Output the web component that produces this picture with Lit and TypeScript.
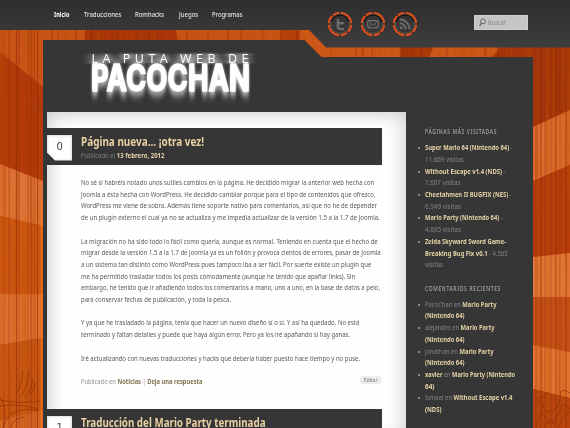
import { LitElement, html, css, svg } from "lit";
import { customElement, property } from "lit/decorators.js";

/** Single line of text condensed or widened so that it spans a given measure. */
@customElement("fit-text")
class FitText extends LitElement {
  @property({ type: Number }) w = 0;
  static styles = css`
    :host { display: block; white-space: nowrap; }
    span { display: inline-block; white-space: pre; transform-origin: 0 50%; }
  `;
  render() {
    return html`<span><slot></slot></span>`;
  }
  firstUpdated() {
    const el = this.renderRoot.querySelector("span") as HTMLElement;
    const natural = el.getBoundingClientRect().width;
    if (!this.w || !natural) return;
    this.style.width = this.w + "px";
    el.style.transform = `scaleX(${this.w / natural})`;
  }
}

@customElement("wood-backdrop")
class WoodBackdrop extends LitElement {
  static styles = css`
    :host { display: block; width: 570px; height: 428px; }
    svg { display: block; }
  `;
  render() {
    const grain = [4, 9, 16.5, 19, 28, 31, 34, 37.5, 52, 58, 76, 91, 101, 118, 137, 149, 158, 187, 208, 228, 241, 263, 281, 297, 331, 356, 363, 372, 402, 407, 414, 421, 447, 462, 485, 498, 505, 536, 541, 545, 551, 556, 560, 566];
    return html`<svg width="570" height="428" viewBox="0 0 570 428">
      <defs>
        <filter id="grain" x="0" y="0" width="100%" height="100%">
          <feTurbulence type="fractalNoise" baseFrequency="0.3 0.004" numOctaves="3" seed="8" />
          <feColorMatrix values="0 0 0 0 .5  0 0 0 0 .08  0 0 0 0 0  2.6 0 0 0 -1.05" />
        </filter>
      </defs>
      <rect width="570" height="428" fill="#b53f0a" />
      <path d="M0 0H85V40L43 87L0 52Z M172 0H203L210 60H180Z M203 0H280V60H210Z" fill="#c85418" />
      <path d="M0 52L43 87V181L0 164Z" fill="#b23a0b" />
      <path d="M0 164L43 181V226L0 216Z" fill="#df7336" />
      <path d="M0 216L43 226V294H0Z" fill="#cd5611" />
      <path d="M0 294H43V338L0 345Z" fill="#df7132" />
      <path d="M0 345L43 338V410L0 420Z" fill="#c95613" />
      <path d="M0 420L43 410V428H0Z" fill="#d66828" />
      <path d="M85 0H172L180 60H85Z" fill="#a83308" />
      <path d="M300 20H400V60H300Z M436 40H505L490 60H428Z" fill="#cd5719" />
      <path d="M400 40H436L428 60H400Z M505 40H570V110L533 127V60H492Z" fill="#a4340a" />
      <path d="M533 127L570 110V165L533 181Z" fill="#dd6d30" />
      <path d="M533 181L570 165V253L533 257Z" fill="#b63c0d" />
      <path d="M533 257L570 253V297H533Z" fill="#e47838" />
      <path d="M533 297H570V352L533 345Z" fill="#c55017" />
      <path d="M533 345L570 352V398L533 389Z" fill="#e27431" />
      <path d="M533 389L570 398V428H533Z" fill="#b9440f" />
      <rect width="570" height="428" filter="url(#grain)" opacity=".42" />
      ${grain.map((x, i) => svg`<path d="M${x} 0V428" stroke="#8a2503" stroke-width=${0.6 + (i % 3) * 0.3} opacity=${0.38 + (i % 4) * 0.08} />`)}
      <path d="M41.5 200V428" stroke="#f07a22" stroke-width="1.4" opacity=".8" />
      <g fill="none" stroke="#91300a" stroke-width="1" opacity=".7">
        <path d="M16 394q6-9 7-24M20 397q8-10 9-26M25 397q6-6 8-18M30 396q4-5 5-14M0 400q18 4 40 1M0 406q20-3 38 3M3 428q3-12 12-16t24-2M10 428q4-10 14-11M0 398q8 8 3 30" />
        <path d="M534 405q8-9 9 0t9 6 8-14 10-4M536 428q3-22 10-10t12-4 12-5M545 428q6-16 10-2M558 428q5-14 12-16M534 398q8 2 14-6" />
        <path d="M43 96q-6 4-4 10t4 2M36 110h7" />
      </g>
    </svg>`;
  }
}

@customElement("social-badge")
class SocialBadge extends LitElement {
  @property() kind = "";
  static styles = css`
    :host, svg { display: block; }
  `;
  glyph() {
    if (this.kind === "twitter")
      return svg`<path d="M10.9 9v6.2a2.8 2.8 0 0 0 2.8 2.8h2.3M10.9 12.3h4.8" fill="none" stroke="#6a6a6a" stroke-width="2.6" stroke-linecap="round" />`;
    if (this.kind === "mail")
      return svg`<rect x="7.7" y="9.6" width="10.6" height="7.2" rx="1" fill="none" stroke="#6e6e6e" stroke-width="1.2" /><path d="M8.3 10.3L13 14L17.7 10.3M8.3 16.3L11.3 13.3M17.7 16.3L14.7 13.3" fill="none" stroke="#6e6e6e" stroke-width=".9" />`;
    return svg`<circle cx="9.3" cy="16.8" r="1.5" fill="#6c6c6c" /><path d="M7.8 12.3a6 6 0 0 1 6 6M7.8 8.5a9.8 9.8 0 0 1 9.8 9.8" fill="none" stroke="#6c6c6c" stroke-width="1.9" />`;
  }
  render() {
    return html`<svg width="26" height="26" viewBox="0 0 26 26">
      <circle cx="13" cy="13" r="12.5" fill="#242221" />
      <circle cx="13" cy="13" r="11.2" fill="none" stroke="#d9501e" stroke-width="2.2" />
      <path d="M13 0V3M13 23V26M0 13H3M23 13H26M4.8 3.8L6 5M20 21L21.6 22.6" stroke="#303030" stroke-width="1.4" />
      <circle cx="13" cy="13" r="9.4" fill="#353535" stroke="#62564f" stroke-width="1" />
      <path d="M4.2 11a9.1 9.1 0 0 1 17.6 0" fill="none" stroke="#151515" stroke-width="1.3" />
      ${this.glyph()}
    </svg>`;
  }
}

// [label, measure, gap after it]
const NAV: [string, number, number][] = [
  ["Inicio", 15.5, 14.7], ["Traducciones", 37.3, 14.5], ["Romhacks", 29.2, 14.3], ["Juegos", 19.3, 14.2], ["Programas", 30.5, 0],
];

const POST: [string, number][][] = [
  [
    ["No sé si habréis notado unos sutiles cambios en la página. He decidido migrar la anterior web hecha con", 293.3],
    ["Joomla a ésta hecha con WordPress. He decidido cambiar porque para el tipo de contenidos que ofrezco,", 294.5],
    ["WordPress me viene de sobra. Además tiene soporte nativo para comentarios, así que no he de depender", 296],
    ["de un plugin externo el cual ya no se actualiza y me impedía actualizar de la versión 1.5 a la 1.7 de Joomla.", 298.7],
  ],
  [
    ["La migración no ha sido todo lo fácil como quería, aunque es normal. Teniendo en cuenta que el hecho de", 296.7],
    ["migrar desde la versión 1.5 a la 1.7 de Joomla ya es un follón y provoca cientos de errores, pasar de Joomla", 299.7],
    ["a un sistema tan distinto como WordPress pues tampoco iba a ser fácil. Por suerte existe un plugin que", 290.3],
    ["me ha permitido trasladar todos los posts cómodamente (aunque he tenido que apañar links). Sin", 274.3],
    ["embargo, he tenido que ir añadiendo todos los comentarios a mano, uno a uno, en la base de datos a pelo,", 299],
    ["para conservar fechas de publicación, y toda la pesca.", 150],
  ],
  [
    ["Y ya que he trasladado la página, tenía que hacer un nuevo diseño sí o sí. Y así ha quedado. No está", 278.3],
    ["terminado y faltan detalles y puede que haya algún error. Pero ya los iré apañando si hay ganas.", 269],
  ],
  [["Iré actualizando con nuevas traducciones y hacks que debería haber puesto hace tiempo y no puse.", 279]],
];

// Each line: [plain lead, linked text, plain tail, measure]
type Line = [string, string, string, number];
const VISITED: Line[][] = [
  [["", "Super Mario 64 (Nintendo 64)", " -", 87.5], ["11.669 visitas", "", "", 39]],
  [["", "Without Escape v1.4 (NDS)", " -", 80.5], ["7.607 visitas", "", "", 35.5]],
  [["", "Cheetahmen II BUGFIX (NES)", " -", 86.5], ["6.949 visitas", "", "", 36]],
  [["", "Mario Party (Nintendo 64)", " -", 77.5], ["4.885 visitas", "", "", 36]],
  [["", "Zelda Skyward Sword Game-", "", 81], ["", "Breaking Bug Fix v0.1", " - 4.565", 82.5], ["visitas", "", "", 18]],
];
const COMMENTS: Line[][] = [
  [["PacoChan en ", "Mario Party", "", 71.5], ["", "(Nintendo 64)", "", 39.5]],
  [["alejandro en ", "Mario Party", "", 69.5], ["", "(Nintendo 64)", "", 39.5]],
  [["Jonathan en ", "Mario Party", "", 68.5], ["", "(Nintendo 64)", "", 39.5]],
  [["", "xavier", " en |Mario Party (Nintendo", 90], ["", "64)", "", 9.5]],
  [["Ismael en ", "Without Escape v1.4", "", 87.5], ["", "(NDS)", "", 16.5]],
];

@customElement("app-root")
class AppRoot extends LitElement {
  static styles = css`
    :host {
      display: grid; width: 570px; height: 428px; overflow: hidden;
      font: 7.5px/11.7px "Noto Sans", "Open Sans", sans-serif; color: #8c8c8c;
    }
    wood-backdrop, header, .panel { grid-area: 1 / 1; }
    header {
      height: 47.5px; display: flex; align-items: flex-start; z-index: 1;
      background: linear-gradient(#2f2f2f, #3d3d3d);
      clip-path: polygon(0 0, 100% 0, 100% 100%, 326px 100%, 309px 30px, 0 30px);
    }
    nav { display: flex; width: 274.5px; padding: 9px 0 0 53.5px; color: #e4e4e4; font-size: 7.3px; font-weight: 500; }
    nav .on { font-weight: 700; color: #fff; }
    .social { display: flex; gap: 6.7px; width: 146.5px; padding-top: 10.5px; margin-left: -1px; }
    .search {
      box-sizing: border-box; width: 54px; height: 15px; margin-top: 15px; padding-left: 4px; background: #c5c5c5;
      border: 1px solid #cfcfcf; display: flex; align-items: center; gap: 2px; color: #868686; font-size: 6.8px;
    }
    .panel {
      margin: 40px 0 0 42.5px; width: 490.5px; height: 388px; background: #363636;
      clip-path: polygon(0 0, 262px 0, 279px 17px, 100% 17px, 100% 100%, 0 100%);
      display: grid; grid-template: 72px 316px / 363px 127.5px;
    }
    .brand { grid-column: 1 / 3; }
    .brand svg { display: block; }
    main {
      margin-left: 4.5px; width: 358.5px; height: 330px; background: #fefefe;
      box-shadow: inset 0 0 17px 2px #ccc; padding-top: 16px; box-sizing: border-box;
    }
    .bar { width: 334.5px; height: 37px; background: #363636; display: flex; gap: 8.5px; }
    .count {
      flex: none; width: 25.3px; height: 25.5px; margin-top: 7px; background: #fff; box-shadow: inset 0 0 3px #bbb;
      clip-path: polygon(0 0, 100% 0, 100% 100%, 8px 100%, 0 calc(100% - 8px));
      color: #3b3b3b; font: 10px/24px "DejaVu Sans", sans-serif; text-align: center; will-change: transform;
    }
    .title { font-size: 12px; font-weight: 700; line-height: 15px; color: #e8cfa3; margin-top: 5.5px; }
    .date { line-height: 10px; margin-top: 1.2px; color: #7d7d7d; font-size: 7.3px; }
    .date b, aside b { color: #e6d3a6; }
    .post { height: 244px; box-sizing: border-box; padding: 12px 0 0 33.7px; color: #595959; }
    .post p { margin: 0 0 11.7px; }
    .meta { display: flex; justify-content: space-between; width: 300.5px; color: #909090; font-size: 7.3px; line-height: 11px; }
    .meta b { color: #80734f; }
    .edit { background: #ececec; border-radius: 2px; height: 8px; line-height: 8px; padding: 0 4px; margin-top: 0.6px; color: #777; font-size: 6px; }
    aside { padding: 14px 0 0 19px; color: #858585; }
    h3 { margin: 0 0 4.5px; font-size: 6.2px; line-height: 11.7px; font-weight: 500; letter-spacing: 0.8px; color: #a8a8a8; }
    ul { list-style: none; margin: 0 0 11.6px; padding: 0; }
    li { display: grid; grid-template-columns: 0 auto; }
    li::before { content: ""; width: 2px; height: 2px; border-radius: 1px; background: #aaa; margin: 5px 0 0 -7px; }
  `;

  line([lead, link, tail, w]: Line) {
    const [after, second = ""] = tail.split("|");
    return html`<fit-text w=${w}>${lead}<b>${link}</b>${after}<b>${second}</b></fit-text>`;
  }

  list(items: Line[][]) {
    return html`<ul>${items.map((it) => html`<li><div>${it.map((l) => this.line(l))}</div></li>`)}</ul>`;
  }

  render() {
    return html`
      <wood-backdrop></wood-backdrop>
      <header>
        <nav>${NAV.map(([t, w, gap], i) => html`<fit-text class=${i ? "" : "on"} w=${w} style="margin-right:${gap}px">${t}</fit-text>`)}</nav>
        <div class="social">
          <social-badge kind="twitter"></social-badge>
          <social-badge kind="mail"></social-badge>
          <social-badge kind="rss"></social-badge>
        </div>
        <div class="search">
          <svg width="7" height="9" viewBox="0 0 7 9"><circle cx="4" cy="3.3" r="2.4" fill="none" stroke="#666" /><path d="M2.5 5.2L.6 8" stroke="#666" stroke-width="1.3" /></svg>
          <fit-text w="18">Buscar</fit-text>
        </div>
      </header>
      <div class="panel">
        <div class="brand">
          <svg width="240" height="72" viewBox="42.5 40 240 72">
            <defs>
              <filter id="drop" x="-10%" y="-40%" width="120%" height="180%">
                <feGaussianBlur in="SourceGraphic" stdDeviation="0.8 5" result="b" />
                <feOffset in="b" dy="2" result="o" />
                <feMerge><feMergeNode in="o" /><feMergeNode in="SourceGraphic" /></feMerge>
              </filter>
              <filter id="side" x="-10%" y="-40%" width="120%" height="180%">
                <feGaussianBlur in="SourceGraphic" stdDeviation="5 0.8" result="b" />
                <feMerge><feMergeNode in="b" /><feMergeNode in="b" /><feMergeNode in="SourceGraphic" /></feMerge>
              </filter>
            </defs>
            <text x="91" y="63" font-family="Open Sans" font-weight="400" font-size="12.5" fill="#fff" textLength="160" lengthAdjust="spacing" letter-spacing="3" filter="url(#side)">LA PUTA WEB DE</text>
            <text x="90.5" y="91.3" font-family="Inter" font-weight="700" font-size="36.5" fill="#fff" stroke="#fff" stroke-width="1.6" stroke-linejoin="round" textLength="159" lengthAdjust="spacingAndGlyphs" filter="url(#drop)">PACOCHAN</text>
          </svg>
        </div>
        <main>
          <div class="bar">
            <div class="count">0</div>
            <div>
              <fit-text class="title" w="123">Página nueva... ¡otra vez!</fit-text>
              <fit-text class="date" w="83.5">Publicado el <b>13 febrero, 2012</b></fit-text>
            </div>
          </div>
          <div class="post">
            ${POST.map((p) => html`<p>${p.map(([t, w]) => html`<fit-text w=${w}>${t}</fit-text>`)}</p>`)}
            <div class="meta">
              <fit-text w="121.5">Publicado en <b>Noticias</b> | <b>Deja una respuesta</b></fit-text>
              <div class="edit"><fit-text w="13.5">Editar</fit-text></div>
            </div>
          </div>
          <div class="bar">
            <div class="count">1</div>
            <fit-text class="title" w="184.5">Traducción del Mario Party terminada</fit-text>
          </div>
        </main>
        <aside>
          <h3><fit-text w="72">PÁGINAS MÁS VISITADAS</fit-text></h3>
          ${this.list(VISITED)}
          <h3><fit-text w="76">COMENTARIOS RECIENTES</fit-text></h3>
          ${this.list(COMMENTS)}
        </aside>
      </div>
    `;
  }
}
